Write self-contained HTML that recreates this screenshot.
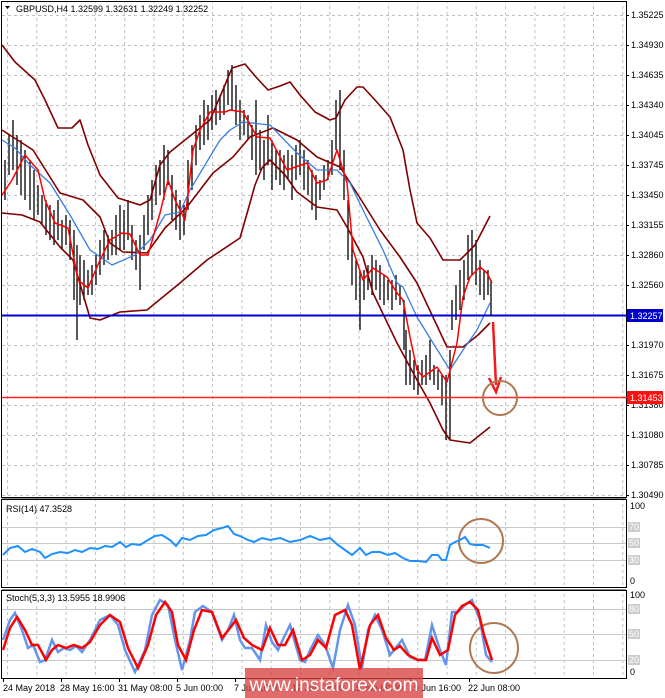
<!DOCTYPE html>
<html><head><meta charset="utf-8"><style>
body{margin:0;background:#fff;width:665px;height:698px;overflow:hidden;font-family:"Liberation Sans",sans-serif}
svg{position:absolute;left:0;top:0}
text{font-family:"Liberation Sans",sans-serif;font-size:9px;fill:#000}
</style></head><body>
<svg width="665" height="698" viewBox="0 0 665 698">
<defs>
<pattern id="vg" x="7" y="0" width="29.3" height="698" patternUnits="userSpaceOnUse"><line x1="0.5" y1="0" x2="0.5" y2="698" stroke="#c0c0c0" stroke-dasharray="3,3"/></pattern>
</defs>
<rect x="2" y="2" width="624" height="495" fill="url(#vg)"/>
<rect x="2" y="499" width="624" height="88" fill="url(#vg)"/>
<rect x="2" y="590" width="624" height="88" fill="url(#vg)"/>
<g stroke="#c0c0c0" stroke-dasharray="3,3">
<line x1="2" y1="15.5" x2="626" y2="15.5"/><line x1="2" y1="45.5" x2="626" y2="45.5"/><line x1="2" y1="75.5" x2="626" y2="75.5"/><line x1="2" y1="105.5" x2="626" y2="105.5"/><line x1="2" y1="135.5" x2="626" y2="135.5"/><line x1="2" y1="165.5" x2="626" y2="165.5"/><line x1="2" y1="195.5" x2="626" y2="195.5"/><line x1="2" y1="225.5" x2="626" y2="225.5"/><line x1="2" y1="255.5" x2="626" y2="255.5"/><line x1="2" y1="285.5" x2="626" y2="285.5"/><line x1="2" y1="345.5" x2="626" y2="345.5"/><line x1="2" y1="375.5" x2="626" y2="375.5"/><line x1="2" y1="405.5" x2="626" y2="405.5"/><line x1="2" y1="435.5" x2="626" y2="435.5"/><line x1="2" y1="465.5" x2="626" y2="465.5"/><line x1="2" y1="495.5" x2="626" y2="495.5"/>
</g>
<g stroke="#c8c8c8"><line x1="2" y1="527.5" x2="626" y2="527.5"/><line x1="2" y1="543.5" x2="626" y2="543.5"/><line x1="2" y1="560.5" x2="626" y2="560.5"/>
<line x1="2" y1="609.5" x2="626" y2="609.5"/><line x1="2" y1="634.5" x2="626" y2="634.5"/><line x1="2" y1="660.5" x2="626" y2="660.5"/></g>
<g fill="none" stroke="#000"><rect x="1.5" y="1.5" width="625" height="496"/><rect x="1.5" y="499.5" width="625" height="88"/><rect x="1.5" y="590.5" width="625" height="88"/></g>
<line x1="2" y1="498.5" x2="626" y2="498.5" stroke="#888"/>
<line x1="2" y1="589.5" x2="626" y2="589.5" stroke="#888"/>
<!-- candles -->
<g stroke="#000" stroke-width="1.3">
<path d="M5,160V200M9,135V175M13,120V170M17,135V185M21,140V195M25,150V200M30,160V210M34,170V220M38,185V215M42,195V225M46,200V235M50,205V240M54,210V245M58,200V240M62,220V250M66,215V245M70,220V260M74,230V300M77,245V340M80,255V305M84,260V300M88,270V295M92,265V295M96,255V285M100,240V275M104,230V265M108,235V260M112,230V255M116,215V255M120,205V250M124,210V250M128,200V240M132,225V260M136,240V270M140,235V290M144,215V250M148,195V235M152,180V220M156,165V205M160,160V195M164,145V200M168,150V185M172,175V220M176,190V230M180,200V240M184,205V235M188,160V210M192,145V190M196,125V165M200,115V150M204,100V145M208,105V140M212,95V130M216,90V125M220,95V120M224,85V115M228,70V105M232,65V110M236,85V125M240,100V140M244,110V135M248,115V140M252,125V160M256,100V175M260,130V170M264,140V180M268,115V165M272,140V190M276,150V180M280,150V185M284,155V190M288,150V180M292,155V200M296,145V180M300,140V175M304,150V190M308,160V195M312,170V210M316,175V220M320,180V200M324,165V190M328,160V180M332,140V175M336,100V150M340,90V170M344,150V200M348,200V260M352,240V285M356,260V300M360,270V330M364,270V300M368,265V290M372,255V295M376,260V290M380,265V300M384,275V305M388,280V300M392,280V310M396,275V300M400,285V305M404,300V350M406,330V385M410,350V385M414,360V390M418,365V395M422,360V385M426,355V385M430,340V380M434,365V385M438,370V390M442,375V405M446,375V440M450,350V440M452,300V330M456,285V320M460,270V310M464,260V300M468,235V280M472,230V275M476,240V285M480,260V295M484,270V300M488,270V295M491,280V315"/>
</g>
<!-- bands -->
<g fill="none" stroke-linejoin="round">
<polyline stroke="#800000" stroke-width="1.6" points="2,45 15,62 35,80 45,100 58,128 72,128 80,120 88,145 100,175 118,198 140,205 150,200 160,165 170,152 185,140 210,120 225,85 232,68 245,64 255,76 268,90 280,86 290,82 300,95 315,112 330,120 336,118 345,100 357,87 363,87 375,100 390,117 403,150 410,190 417,223 430,238 443,260 460,260 475,245 490,216"/>
<polyline stroke="#800000" stroke-width="1.6" points="2,130 33,150 60,193 83,200 100,217 110,243 123,252 147,253 165,228 187,207 213,173 233,157 250,137 273,128 297,140 317,157 340,167 360,198 380,230 400,257 417,283 432,315 447,347 463,347 478,335 490,323"/>
<polyline stroke="#800000" stroke-width="1.6" points="2,213 22,215 40,222 60,247 73,260 90,318 100,320 120,312 147,310 180,283 207,260 240,238 248,210 255,185 262,168 270,160 285,175 297,192 317,207 337,210 347,227 363,257 373,293 397,343 417,380 430,403 443,430 450,440 470,443 490,427"/>
<polyline stroke="#3a7de0" stroke-width="1.3" points="2,140 15,148 30,165 50,183 70,215 90,250 112,265 135,255 150,240 165,215 180,212 190,190 205,165 220,140 230,130 243,122 270,125 297,153 317,170 337,170 350,183 363,210 383,250 397,283 403,287 417,317 433,343 450,370 463,350 477,330 490,303"/>
<polyline stroke="#ff0000" stroke-width="1.5" points="2,195 12,180 25,155 38,170 45,200 55,223 68,228 78,280 88,288 100,260 110,240 122,233 130,234 140,255 148,255 160,213 168,180 175,200 185,220 193,150 200,130 210,112 225,112 230,110 243,112 257,137 270,138 287,170 307,163 317,183 327,180 337,150 347,183 353,250 363,280 373,268 387,277 397,293 403,300 410,337 417,370 423,377 437,367 447,382 457,343 463,297 470,277 480,267 487,273 492,283"/>
</g>
<line x1="2" y1="315.5" x2="627" y2="315.5" stroke="#0000cc" stroke-width="2"/>
<line x1="2" y1="397.5" x2="627" y2="397.5" stroke="#ff2020" stroke-width="1.5"/>
<path d="M493,322 L496,385" stroke="#ee1c1c" stroke-width="2.5" fill="none"/>
<path d="M489,378 L496,392 L501,377" stroke="#ee1c1c" stroke-width="2.5" fill="none"/>
<g fill="none" stroke="#b07850" stroke-width="2"><circle cx="500" cy="398" r="17"/><circle cx="481" cy="541" r="22"/><ellipse cx="494" cy="648" rx="24" ry="25"/></g>
<polyline fill="none" stroke="#1e90ff" stroke-width="2" points="3,555 10,548 18,546 25,552 32,549 40,552 45,558 52,554 60,552 68,553 75,550 82,552 90,548 98,549 105,546 112,547 120,542 126,547 132,544 140,545 148,540 155,536 162,535 170,540 176,546 182,538 190,540 198,536 206,535 214,530 222,528 228,526 234,534 240,536 248,540 254,542 262,538 270,540 280,538 290,542 300,540 310,536 320,540 330,538 338,545 345,550 352,555 360,548 366,555 372,552 380,552 388,555 395,553 403,558 410,561 418,561 426,562 432,555 438,555 442,560 446,560 450,545 455,542 460,540 465,537 470,544 475,545 483,545 490,548"/>
<polyline fill="none" stroke="#6495ed" stroke-width="2.5" points="3,640 10,620 15,613 22,630 28,648 33,645 40,662 45,660 52,640 58,652 64,648 70,650 76,646 82,652 90,640 100,620 110,615 118,625 125,650 135,672 145,650 152,615 160,600 168,605 175,640 182,670 190,640 195,612 203,606 212,612 222,640 228,630 234,615 240,640 245,648 252,648 260,660 266,625 272,642 278,650 285,635 290,625 300,660 305,662 310,650 318,635 325,645 333,668 340,630 348,605 355,625 362,668 368,630 375,615 382,630 390,655 398,645 402,640 410,657 418,660 425,660 432,625 440,650 446,665 452,612 458,612 466,604 472,600 480,620 486,655 492,662"/>
<polyline fill="none" stroke="#ff0000" stroke-width="2.5" points="3,650 10,628 17,617 25,630 32,645 38,645 46,660 52,650 58,645 66,648 74,645 82,648 90,642 100,625 110,615 120,622 128,648 138,668 148,645 156,615 165,602 172,612 178,645 186,660 194,630 202,610 212,612 222,638 230,628 236,620 244,638 252,645 262,650 270,628 278,645 285,645 293,630 302,660 310,655 318,640 326,648 335,615 345,610 352,625 360,670 370,625 378,615 386,638 394,650 400,646 408,655 418,660 426,660 432,638 440,655 448,650 455,615 462,606 470,602 478,610 484,635 492,660"/>
<path d="M5,6 L10,6 L7.5,9 Z" fill="#000"/>
<text x="16" y="12">GBPUSD,H4  1.32599 1.32631 1.32249 1.32252</text>
<text x="6" y="512">RSI(14) 47.3528</text>
<text x="6" y="601">Stoch(5,3,3) 13.5955 18.9906</text>
<g>
<text x="631" y="18">1.35225</text><text x="631" y="48">1.34930</text><text x="631" y="78">1.34635</text><text x="631" y="108">1.34340</text><text x="631" y="138">1.34045</text><text x="631" y="168">1.33745</text><text x="631" y="198">1.33450</text><text x="631" y="228">1.33155</text><text x="631" y="258">1.32860</text><text x="631" y="288">1.32560</text><text x="631" y="348">1.31970</text><text x="631" y="378">1.31675</text><text x="631" y="408">1.31380</text><text x="631" y="438">1.31080</text><text x="631" y="468">1.30785</text><text x="631" y="498">1.30490</text>
</g>
<g stroke="#000"><line x1="626" y1="15.5" x2="629" y2="15.5"/><line x1="626" y1="45.5" x2="629" y2="45.5"/><line x1="626" y1="75.5" x2="629" y2="75.5"/><line x1="626" y1="105.5" x2="629" y2="105.5"/><line x1="626" y1="135.5" x2="629" y2="135.5"/><line x1="626" y1="165.5" x2="629" y2="165.5"/><line x1="626" y1="195.5" x2="629" y2="195.5"/><line x1="626" y1="225.5" x2="629" y2="225.5"/><line x1="626" y1="255.5" x2="629" y2="255.5"/><line x1="626" y1="285.5" x2="629" y2="285.5"/><line x1="626" y1="345.5" x2="629" y2="345.5"/><line x1="626" y1="375.5" x2="629" y2="375.5"/><line x1="626" y1="405.5" x2="629" y2="405.5"/><line x1="626" y1="435.5" x2="629" y2="435.5"/><line x1="626" y1="465.5" x2="629" y2="465.5"/><line x1="626" y1="495.5" x2="629" y2="495.5"/></g>
<rect x="627" y="309" width="36" height="13" fill="#0000cc"/><text x="630" y="319" style="fill:#fff">1.32257</text>
<rect x="627" y="391" width="36" height="13" fill="#ff1010"/><text x="630" y="401" style="fill:#fff">1.31453</text>
<text x="630" y="509">100</text>
<rect x="628" y="522" width="12" height="10" fill="#ccc"/><text x="629" y="530" style="fill:#fff">70</text>
<rect x="628" y="538" width="12" height="10" fill="#ccc"/><text x="629" y="546" style="fill:#fff">50</text>
<rect x="628" y="555" width="12" height="10" fill="#ccc"/><text x="629" y="563" style="fill:#fff">30</text>
<text x="630" y="584">0</text>
<text x="630" y="598">100</text>
<rect x="628" y="604" width="12" height="10" fill="#ccc"/><text x="629" y="612" style="fill:#fff">80</text>
<rect x="628" y="629" width="12" height="10" fill="#ccc"/><text x="629" y="637" style="fill:#fff">50</text>
<rect x="628" y="655" width="12" height="10" fill="#ccc"/><text x="629" y="663" style="fill:#fff">20</text>
<text x="630" y="675">0</text>
<g stroke="#000"><line x1="3.5" y1="678" x2="3.5" y2="682"/><line x1="61.5" y1="678" x2="61.5" y2="682"/><line x1="119.5" y1="678" x2="119.5" y2="682"/><line x1="177.5" y1="678" x2="177.5" y2="682"/><line x1="235.5" y1="678" x2="235.5" y2="682"/><line x1="410.5" y1="678" x2="410.5" y2="682"/><line x1="469.5" y1="678" x2="469.5" y2="682"/></g>
<text x="3" y="691">24 May 2018</text><text x="60" y="691">28 May 16:00</text><text x="118" y="691">31 May 08:00</text><text x="176" y="691">5 Jun 00:00</text><text x="234" y="691">7 Jun 16:00</text><text x="292" y="691">12 Jun 08:00</text><text x="351" y="691">15 Jun 00:00</text><text x="409" y="691">19 Jun 16:00</text><text x="468" y="691">22 Jun 08:00</text>
<rect x="245" y="668" width="178" height="30" fill="#d84040" fill-opacity="0.78"/>
<text x="334" y="691" text-anchor="middle" style="font-size:19px;fill:#fff">www.instaforex.com</text>
</svg>
</body></html>
